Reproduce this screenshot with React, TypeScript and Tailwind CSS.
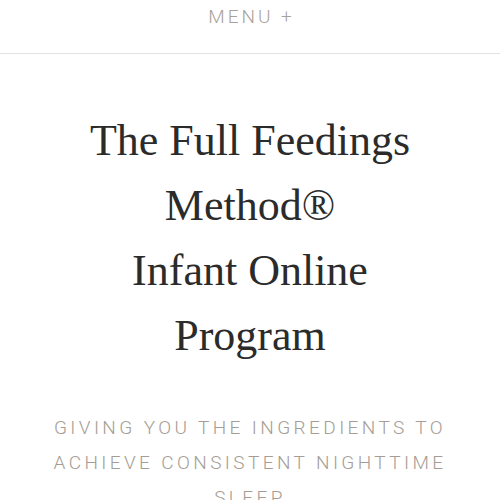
export default function App() {
  return (
    <div className="min-h-screen bg-white flex flex-col overflow-hidden">
      {/* header */}
      <header className="h-[54px] border-b border-[#e3e3e3] flex justify-center items-start pt-[5px]">
        <button className="font-['Roboto',sans-serif] font-light text-[19px] leading-[24px] tracking-[3px] text-[#a9a29a] pl-[3px]">
          MENU +
        </button>
      </header>

      {/* hero */}
      <main className="flex flex-col items-center text-center pt-[54px] px-6">
        <h1 className="font-['Liberation_Serif',serif] text-[44px] leading-[65px] text-[#2b2b2b]">
          The Full Feedings
          <br />
          Method®
          <br />
          Infant Online
          <br />
          Program
        </h1>
        <p className="mt-[42px] font-['Roboto',sans-serif] font-light text-[19px] leading-[35px] tracking-[3.4px] text-[#a59d95] max-w-[440px]">
          GIVING YOU THE INGREDIENTS TO ACHIEVE CONSISTENT NIGHTTIME SLEEP
        </p>
      </main>
    </div>
  );
}
